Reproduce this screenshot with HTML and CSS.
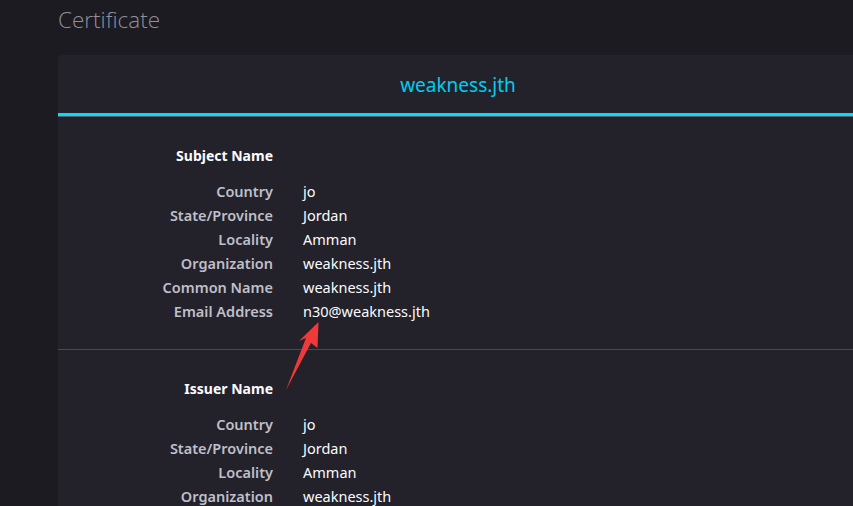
FILE: index.html
```html
<!DOCTYPE html>
<html>
<head>
<meta charset="utf-8">
<link rel="stylesheet" href="styles.css">
</head>
<body>
<main class="page">
  <h1 class="title">Certificate</h1>
  <section class="card">
    <div class="card-header">weakness.jth</div>
    <div class="section">
      <div class="section-title">Subject Name</div>
      <div class="rows">
        <div class="label">Country</div><div class="value">jo</div>
        <div class="label">State/Province</div><div class="value">Jordan</div>
        <div class="label">Locality</div><div class="value">Amman</div>
        <div class="label">Organization</div><div class="value">weakness.jth</div>
        <div class="label">Common Name</div><div class="value">weakness.jth</div>
        <div class="label">Email Address</div><div class="value">n30@weakness.jth</div>
      </div>
    </div>
    <div class="section">
      <div class="section-title">Issuer Name</div>
      <div class="rows">
        <div class="label">Country</div><div class="value">jo</div>
        <div class="label">State/Province</div><div class="value">Jordan</div>
        <div class="label">Locality</div><div class="value">Amman</div>
        <div class="label">Organization</div><div class="value">weakness.jth</div>
      </div>
    </div>
  </section>
</main>
<svg class="arrow" width="853" height="506" viewBox="0 0 853 506">
  <polygon points="318.5,322 317.5,348 311,343 286,390 306,338 299,341" fill="#f03a3a"/>
</svg>
</body>
</html>
```
FILE: styles.css
```css
html, body {
  margin: 0;
  padding: 0;
  background: #1c1b22;
  overflow: hidden;
  width: 853px;
  height: 506px;
}
body {
  font-family: "Noto Sans", "Open Sans", sans-serif;
  font-size: 14.5px;
  color: #fbfbfe;
}
.page {
  padding: 3px 0 0 58px;
}
.title {
  margin: 0 0 18px 0;
  font-family: "Open Sans", "Noto Sans", sans-serif;
  font-weight: 300;
  font-size: 22.5px;
  line-height: 34px;
  color: #8f8f9d;
  height: 34px;
}
.card {
  width: 800px;
  background: #23222b;
  border-radius: 4px 4px 0 0;
}
.card-header {
  height: 58px;
  line-height: 60px;
  text-align: center;
  font-size: 19px;
  color: #00ccee;
  border-bottom: 3px solid #00ddff;
  box-shadow: 0 1px 0 #5b5b66;
}
.section {
  padding: 28px 0 26px 0;
  border-bottom: 1px solid #4a4a55;
}
.section + .section {
  padding-top: 27px;
}
.section-title {
  width: 215px;
  text-align: right;
  font-weight: 700;
  font-size: 14px;
  line-height: 24px;
  color: #fbfbfe;
  margin-bottom: 11px;
}
.rows {
  display: grid;
  grid-template-columns: 215px 1fr;
  column-gap: 30px;
  line-height: 24px;
}
.label {
  text-align: right;
  font-weight: 600;
  color: #bfbfc9;
}
.value {
  color: #fbfbfe;
}
.arrow {
  position: absolute;
  left: 0;
  top: 0;
  pointer-events: none;
}
```
